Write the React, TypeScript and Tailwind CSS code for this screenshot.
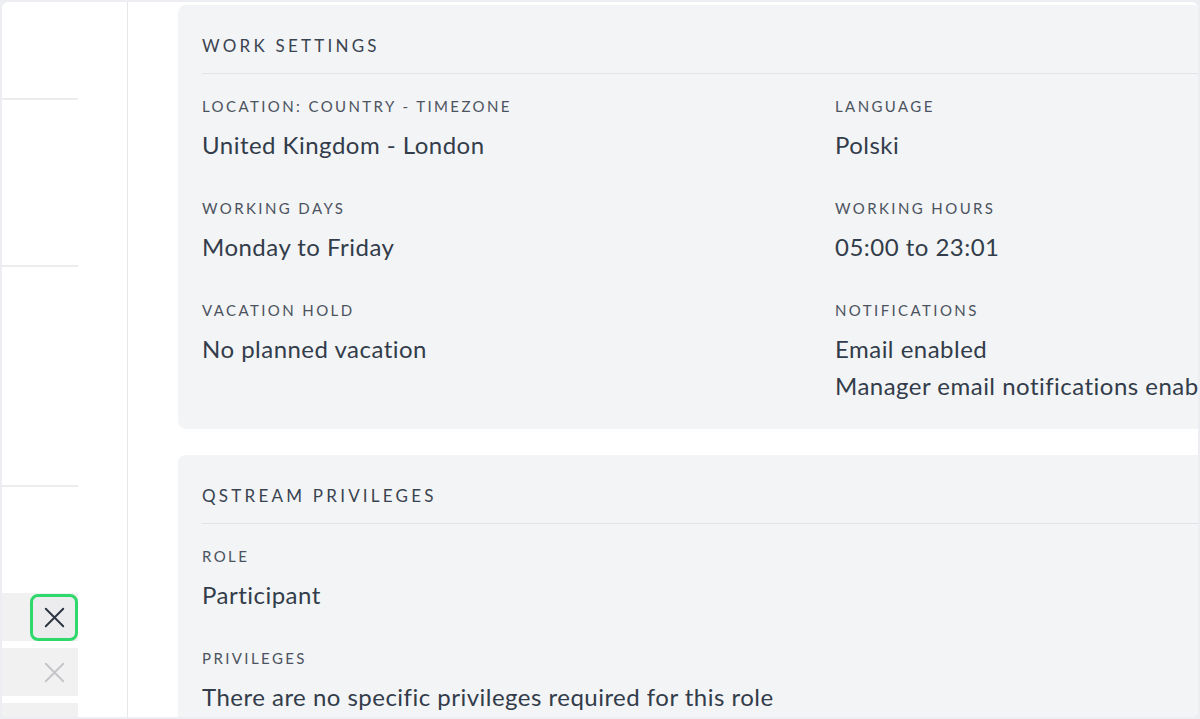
type Field = {
  label: string;
  values: string[];
};

const workFields: Field[] = [
  { label: 'Location: country - timezone', values: ['United Kingdom - London'] },
  { label: 'Language', values: ['Polski'] },
  { label: 'Working days', values: ['Monday to Friday'] },
  { label: 'Working hours', values: ['05:00 to 23:01'] },
  { label: 'Vacation hold', values: ['No planned vacation'] },
  { label: 'Notifications', values: ['Email enabled', 'Manager email notifications enabled'] },
];

const privilegeFields: Field[] = [
  { label: 'Role', values: ['Participant'] },
  { label: 'Privileges', values: ['There are no specific privileges required for this role'] },
];

const CloseIcon = ({ className }: { className?: string }) => (
  <svg viewBox="0 0 24 24" className={className} fill="none" stroke="currentColor" strokeWidth={2.2} strokeLinecap="round">
    <path d="M2 2 L22 22 M22 2 L2 22" />
  </svg>
);

const FieldBlock = ({ field }: { field: Field }) => (
  <div className="flex flex-col">
    <span className="text-[15px] leading-[20px] uppercase tracking-[0.16em] text-[#4b5360]">
      {field.label}
    </span>
    <div className="mt-[10px] flex flex-col">
      {field.values.map((v) => (
        <span key={v} className="text-[24px] leading-[37px] tracking-[0.02em] text-[#323c4a] whitespace-nowrap">
          {v}
        </span>
      ))}
    </div>
  </div>
);

const Card = ({ title, children }: { title: string; children: React.ReactNode }) => (
  <section className="w-[1300px] bg-[#f3f4f5] rounded-lg px-6 pt-[29px] pb-[25px]">
    <h2 className="text-[17px] leading-[24px] uppercase tracking-[0.19em] text-[#3a4350]">
      {title}
    </h2>
    <div className="h-px bg-[#e1e3e6] mt-[15px] mb-[22px]" />
    {children}
  </section>
);

const App = () => {
  return (
    <div
      className="w-[1200px] h-[719px] bg-[#eceef1] p-[2px] overflow-hidden"
      style={{ fontFamily: 'Lato, "Noto Sans", sans-serif' }}
    >
      <div className="flex h-full bg-white rounded-md overflow-hidden">
        {/* left list, mostly cut off */}
        <aside className="w-[126px] shrink-0 border-r border-[#e6e7ea]">
          <div className="w-[76px] flex flex-col">
            <div className="h-[96px]" />
            <div className="h-[2px] bg-[#ececee]" />
            <div className="h-[165px]" />
            <div className="h-[2px] bg-[#ececee]" />
            <div className="h-[218px]" />
            <div className="h-[2px] bg-[#ececee]" />
            <div className="h-[106px]" />
            <div className="h-[48px] bg-[#f1f1f2] flex items-center justify-end">
              <button className="w-[48px] h-[47px] flex items-center justify-center rounded-[8px] border-[3px] border-[#2fd86a] bg-[#ececee]">
                <CloseIcon className="w-[21px] h-[21px] text-[#2b3440]" />
              </button>
            </div>
            <div className="h-[7px]" />
            <div className="h-[48px] bg-[#f1f1f2] flex items-center justify-end pr-[13px]">
              <CloseIcon className="w-[21px] h-[21px] text-[#c4c5c8]" />
            </div>
            <div className="h-[7px]" />
            <div className="h-[48px] bg-[#f1f1f2]" />
          </div>
        </aside>

        <main className="flex-1 overflow-hidden pl-[50px] pt-[3px] flex flex-col gap-[26px]">
          <Card title="Work settings">
            <div className="grid grid-cols-[633px_633px] gap-y-[35px]">
              {workFields.map((f) => (
                <FieldBlock key={f.label} field={f} />
              ))}
            </div>
          </Card>
          <Card title="Qstream privileges">
            <div className="flex flex-col gap-[35px]">
              {privilegeFields.map((f) => (
                <FieldBlock key={f.label} field={f} />
              ))}
            </div>
          </Card>
        </main>
      </div>
    </div>
  );
};

export default App;
